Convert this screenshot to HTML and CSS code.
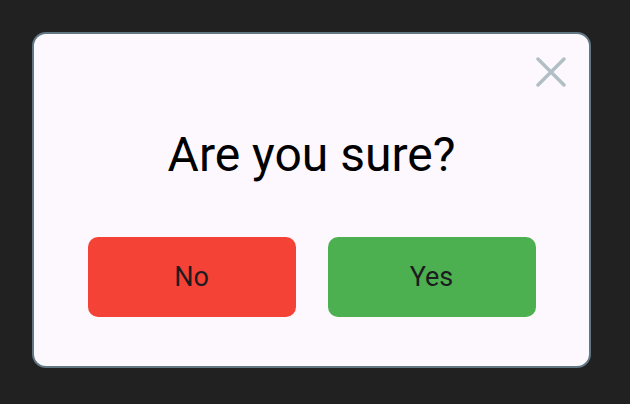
FILE: index.html
```html
<!DOCTYPE html>
<html>
<head>
<meta charset="utf-8">
<link rel="stylesheet" href="styles.css">
</head>
<body>
<div class="dialog">
  <button class="close" aria-label="Close">
    <svg width="30" height="30" viewBox="0 0 30 30"><path d="M2 2 L28 28 M28 2 L2 28" stroke="#b0bec5" stroke-width="3.4" stroke-linecap="round" fill="none"/></svg>
  </button>
  <h1 class="title">Are you sure?</h1>
  <div class="actions">
    <button class="btn no">No</button>
    <button class="btn yes">Yes</button>
  </div>
</div>
</body>
</html>
```
FILE: styles.css
```css
html, body { margin: 0; padding: 0; }
body {
  background: #212121;
  width: 630px;
  height: 404px;
  padding: 32px;
  box-sizing: border-box;
  font-family: Roboto, "Noto Sans", sans-serif;
}
.dialog {
  position: relative;
  width: 559px;
  height: 336px;
  box-sizing: border-box;
  background: #fdf7fe;
  border: 2px solid #607883;
  border-radius: 14px;
  display: flex;
  flex-direction: column;
  align-items: center;
}
.close {
  position: absolute;
  top: 23px;
  right: 23px;
  width: 30px;
  height: 30px;
  padding: 0;
  border: none;
  background: none;
  display: flex;
}
.title {
  margin: 93px 0 0;
  font-weight: 400;
  font-size: 48px;
  line-height: 56px;
  color: #000;
}
.actions {
  margin-top: 54px;
  display: flex;
  gap: 32px;
}
.btn {
  width: 208px;
  height: 80px;
  border: none;
  border-radius: 10px;
  font-family: Roboto, "Noto Sans", sans-serif;
  font-size: 27px;
  color: #1d1b20;
}
.no { background: #f44336; }
.yes { background: #4caf50; }
```
